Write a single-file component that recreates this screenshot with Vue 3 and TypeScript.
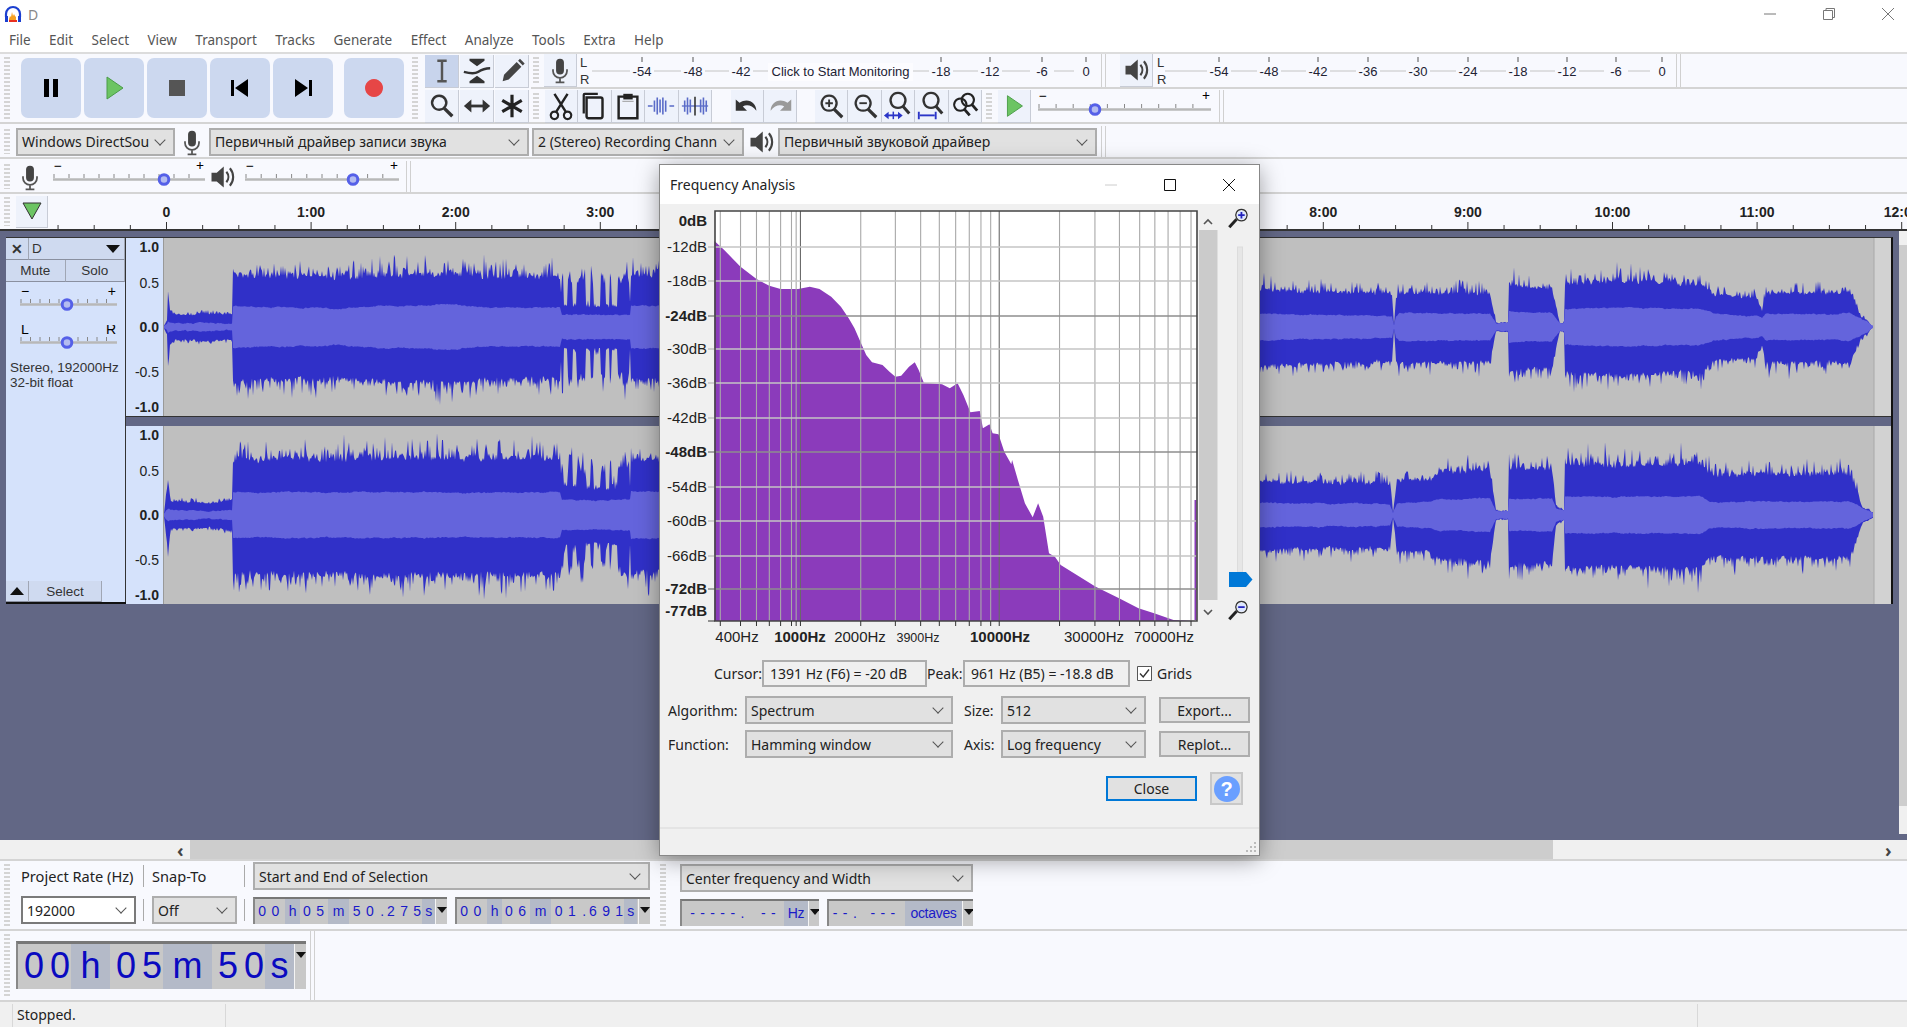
<script setup lang="ts">
import { h } from 'vue'

type Shape = { d: string; fill?: string; stroke?: string; w?: number }

const f = (d: string, fill = '#222'): Shape => ({ d, fill })
const s = (d: string, stroke = '#333', w = 2.5): Shape => ({ d, stroke, w })

const lens = 'M14 5a8 8 0 1 0 .01 0z'
const wavePath = 'M2 16h5M9 10v12M12 7v18M15 9v14M18 7v18M21 10v12M25 16h5'

const icons: Record<string, Shape[]> = {
  pause: [f('M9 7h5v18H9zM18 7h5v18h-5z', '#000')],
  play: [{ d: 'M9 5l16 11L9 27z', fill: '#6cc463', stroke: '#4a9c48', w: 1 }],
  stop: [f('M8 8h16v16H8z', '#555')],
  start: [f('M7 8h3v16H7zM24 7v18L11 16z', '#000')],
  end: [f('M8 7v18l13-9zM22 8h3v16h-3z', '#000')],
  rec: [f('M16 7a9 9 0 1 0 .01 0z', '#e64646')],
  ibeam: [s('M11 5h10M11 27h10M16 5v22', '#555', 2.6)],
  env: [f('M8 3h16v2l-8 6-8-6zM16 21l8 6v2H8v-2z', '#333'), s('M2 17c8 2 12 2 15 0s8-4 13-4', '#333', 2.6)],
  pencil: [f('M6 27l1.5-7L21 6.5l5 5L12.5 25zM22.5 5l2-2 5 5-2 2z', '#444')],
  zoom: [s('M13 5a7.5 7.5 0 1 0 .01 0z', '#333', 2.6), s('M18.5 18.5L27 27', '#333', 3.6)],
  shift: [s('M6 16h20', '#333', 3), f('M10 9v14l-8-7zM22 9v14l8-7z', '#333')],
  multi: [s('M16 4v24M5.6 10l20.8 12M5.6 22l20.8-12', '#222', 3.4)],
  cut: [s('M9 3l12 19M23 3L11 22', '#222', 2.6), s('M9 22a4 4 0 1 0 .01 0zM23 22a4 4 0 1 0 .01 0z', '#222', 2.4)],
  copy: [{ d: 'M7 7h15a2 2 0 0 1 2 2v18a2 2 0 0 1-2 2H9a2 2 0 0 1-2-2z', fill: '#eef2fb', stroke: '#222', w: 2.6 }, s('M4 24V4a1 1 0 0 1 1-1h14', '#222', 2.4)],
  paste: [{ d: 'M6 6h20v23H6z', fill: 'none', stroke: '#222', w: 2.6 }, f('M11 3h10v6H11z', '#222'), s('M10 11h12', '#999', 1)],
  trim: [s(wavePath, '#5a6bc8', 1.7)],
  silence: [s('M2 16h28', '#5a6bc8', 1.4), s('M5 10v12M8 7v18M11 9v14M22 9v14M25 7v18M28 10v12', '#5a6bc8', 1.7), s('M16 6v20', '#333', 1.7)],
  undo: [f('M4 9v12h12l-4.5-4.5c4-2.8 10-1.5 14.5 4.5 0-8.5-9-14.5-18-8.5z', '#333')],
  redo: [f('M28 9v12H16l4.5-4.5c-4-2.8-10-1.5-14.5 4.5 0-8.5 9-14.5 18-8.5z', '#9a9a9a')],
  zoomin: [s(lens, '#333', 2.4), s('M10 13h8M14 9v8', '#333', 2), s('M19.5 19.5L28 28', '#333', 3.4)],
  zoomout: [s(lens, '#333', 2.4), s('M10 13h8', '#333', 2), s('M19.5 19.5L28 28', '#333', 3.4)],
  zoomsel: [s('M16 2a8 8 0 1 0 .01 0z', '#333', 2.4), s('M21 16l7 8', '#333', 3.2), s('M4 26h14', '#2b35c8', 2), f('M1 26l5-4v8zM21 26l-5-4v8z', '#2b35c8'), s('M11 22v8', '#2b35c8', 1.6)],
  zoomfit: [s('M16 2a8 8 0 1 0 .01 0z', '#333', 2.4), s('M21 16l7 8', '#333', 3.2), s('M4 26h16', '#2b35c8', 2), s('M3 22v8M21 22v8', '#2b35c8', 2)],
  zoomtog: [s('M11 8a6.5 6.5 0 1 0 .01 0z', '#222', 2.2), s('M19 3a6.5 6.5 0 1 0 .01 0z', '#222', 2.2), s('M15 19l6 7M23 14l6 7', '#222', 3)],
  mic: [f('M16 3a4.5 4.5 0 0 1 4.5 4.5v9a4.5 4.5 0 0 1-9 0v-9A4.5 4.5 0 0 1 16 3z', '#444'), s('M8 15v2a8 8 0 0 0 16 0v-2M16 25v5M11 30h10', '#555', 2)],
  spk: [f('M4 11h6l8-7v24l-8-7H4z', '#444'), s('M21 10c3 3.5 3 8.5 0 12M25 6c5 6 5 14 0 20', '#444', 2.4)],
  lensup: [s('M19 3a7 7 0 1 0 .01 0z', '#333', 1.6), f('M19 4.5a5.5 5.5 0 1 0 .01 0z', '#dce6ff'), s('M15 10h8M19 6v8', '#2222bb', 2.2), s('M13 15L4 25', '#222', 3.6)],
  lensdn: [s('M19 3a7 7 0 1 0 .01 0z', '#333', 1.6), f('M19 4.5a5.5 5.5 0 1 0 .01 0z', '#dce6ff'), s('M15 10h8', '#2222bb', 2.2), s('M13 15L4 25', '#222', 3.6)]
}

const Ico = (p: { n: string; s?: number | string }) =>
  h('svg', { width: p.s ?? 28, height: p.s ?? 28, viewBox: '0 0 32 32', class: 'ico' },
    icons[p.n].map(a => h('path', {
      d: a.d,
      fill: a.fill ?? 'none',
      stroke: a.stroke ?? 'none',
      'stroke-width': a.w ?? 0
    })))

// small slider with tick marks and a round blue thumb
const Slider = (p: { w: number; at: number; a?: string; b?: string }) => {
  const ticks = []
  for (let x = 1; x < p.w; x += p.w / 10) {
    ticks.push(h('path', { d: `M${x} 12v4`, stroke: '#888', 'stroke-width': 1 }))
  }
  return h('svg', { width: p.w + 2, height: 30, viewBox: `0 0 ${p.w + 2} 30`, class: 'ico' }, [
    h('text', { x: 1, y: 9, class: 'sl-txt' }, p.a ?? '−'),
    h('text', { x: p.w + 1, y: 9, 'text-anchor': 'end', class: 'sl-txt' }, p.b ?? '+'),
    ...ticks,
    h('path', { d: `M0 17.5H${p.w + 2}`, stroke: '#b8b8b8', 'stroke-width': 2.6 }),
    h('circle', { cx: p.at, cy: 17.5, r: 4.8, fill: '#b4bcf0', stroke: '#5560e8', 'stroke-width': 3 })
  ])
}

const menu = ['File', 'Edit', 'Select', 'View', 'Transport', 'Tracks', 'Generate', 'Effect', 'Analyze', 'Tools', 'Extra', 'Help']
const transport = [
  { n: 'pause', g: false }, { n: 'play', g: false }, { n: 'stop', g: false },
  { n: 'start', g: false }, { n: 'end', g: false }, { n: 'rec', g: true }
]
const tools1 = ['ibeam', 'env', 'pencil']
const tools2 = ['zoom', 'shift', 'multi']
const editA = ['cut', 'copy', 'paste', 'trim', 'silence']
const editB = ['undo', 'redo']
const editC = ['zoomin', 'zoomout', 'zoomsel', 'zoomfit', 'zoomtog']

const recLabels = [
  [642, '-54'], [693, '-48'], [741, '-42'], [941, '-18'], [990, '-12'], [1042, '-6'], [1086, '0']
] as [number, string][]
const playLabels = [
  [1219, '-54'], [1269, '-48'], [1318, '-42'], [1368, '-36'], [1418, '-30'], [1468, '-24'], [1518, '-18'], [1567, '-12'], [1616, '-6'], [1662, '0']
] as [number, string][]

// timeline, 144.6px to the minute and 0 at x=166.5
const secX = (m: number) => 166.5 + 144.6 * m
const rulerTicks: { x: number; major: boolean }[] = []
for (let q = -3; q <= 48; q++) rulerTicks.push({ x: secX(q / 4), major: q % 4 === 0 })
const rulerLabels = [0, 1, 2, 3, 4, 5, 6, 7, 8, 9, 10, 11, 12].map(m => ({ x: secX(m), t: m === 0 ? '0' : `${m}:00` }))

type Key = [number, number, number]
const keysA: Key[] = [[164, 2, 1], [167, 8, 3], [168, 38, 5], [170, 18, 4], [175, 13, 3], [232, 14, 3], [233, 56, 19], [340, 54, 17], [350, 54, 18], [440, 58, 21], [500, 55, 18], [560, 54, 18], [562, 22, 11], [630, 22, 11], [631, 56, 20], [1260, 40, 12], [1392, 36, 10], [1394, 2, 1], [1396, 32, 10], [1400, 38, 13], [1490, 36, 12], [1496, 4, 3], [1508, 4, 3], [1509, 46, 14], [1552, 42, 13], [1560, 5, 4], [1564, 6, 4], [1565, 48, 17], [1640, 50, 18], [1700, 46, 16], [1714, 34, 12], [1755, 33, 10], [1762, 18, 8], [1766, 37, 12], [1850, 37, 12], [1860, 12, 8], [1873, 1, 1]]
const keysB: Key[] = [[164, 2, 1], [168, 36, 5], [171, 14, 4], [175, 14, 4], [232, 15, 4], [233, 60, 21], [400, 62, 21], [560, 62, 21], [562, 30, 14], [630, 30, 14], [631, 60, 22], [1260, 36, 11], [1390, 34, 10], [1393, 3, 2], [1397, 36, 10], [1430, 38, 12], [1440, 48, 15], [1490, 48, 15], [1496, 4, 3], [1508, 4, 3], [1509, 52, 15], [1552, 50, 15], [1556, 10, 6], [1564, 5, 4], [1565, 54, 17], [1700, 56, 17], [1710, 44, 12], [1850, 44, 12], [1862, 10, 7], [1873, 3, 2]]
const bars = [[560, 564], [568, 573], [577, 586], [591, 594], [601, 606], [610, 612], [618, 630]]

function buildWave(keys: Key[], seed: number) {
  let st = seed
  const rnd = () => {
    st = (st * 1664525 + 1013904223) % 4294967296
    return st / 4294967296
  }
  const top: string[] = []
  const bot: string[] = []
  const rt: string[] = []
  const rb: string[] = []
  const mid = 89
  let k = 0
  let wob = 0
  for (let x = 164; x <= 1873; x++) {
    while (k < keys.length - 2 && keys[k + 1][0] <= x) k++
    const [x0, p0, r0] = keys[k]
    const [x1, p1, r1] = keys[k + 1]
    const t = Math.min(1, (x - x0) / Math.max(1, x1 - x0))
    let p = (p0 + (p1 - p0) * t) * 1.06
    const r = (r0 + (r1 - r0) * t) * 1.06
    if (x > 561 && x < 631 && bars.some(b => x >= b[0] && x < b[1])) p = 48 + 14 * rnd()
    wob = wob * 0.85 + (rnd() - 0.5) * 1.1
    const spike = () => (rnd() < 0.4 ? p * 0.34 * rnd() * rnd() + p * 0.06 : 0)
    const up = p * (0.82 + 0.1 * rnd()) + spike() + wob
    const dn = p * (0.86 + 0.1 * rnd()) + spike() + wob
    top.push(`${x} ${(mid - up).toFixed(1)}`)
    bot.unshift(`${x} ${(mid + dn).toFixed(1)}`)
    rt.push(`${x} ${(mid - r - wob * 0.7 - rnd() * 0.8).toFixed(1)}`)
    rb.unshift(`${x} ${(mid + r + wob * 0.7 + rnd() * 0.8).toFixed(1)}`)
  }
  return { peak: `M${top.join('L')}L${bot.join('L')}z`, rms: `M${rt.join('L')}L${rb.join('L')}z` }
}
const scale = [{ t: '1.0', b: true, c: 'a' }, { t: '0.5', b: false, c: 'b5' }, { t: '0.0', b: true, c: 'c' }, { t: '-0.5', b: false, c: 'd' }, { t: '-1.0', b: true, c: 'e' }]
const channels = [
  { wave: buildWave(keysA, 17), scale },
  { wave: buildWave(keysB, 93), scale }
]

// spectrum plot, drawn in page coordinates through the viewBox
const gx = (z: number) => 660 + z / 2.5705
const dbLines = [
  { y: 247, t: '-12dB', m: false }, { y: 281, t: '-18dB', m: false }, { y: 316, t: '-24dB', m: true },
  { y: 349, t: '-30dB', m: false }, { y: 383, t: '-36dB', m: false }, { y: 418, t: '-42dB', m: false },
  { y: 452, t: '-48dB', m: true }, { y: 487, t: '-54dB', m: false }, { y: 521, t: '-60dB', m: false },
  { y: 556, t: '-66dB', m: false }, { y: 589, t: '-72dB', m: true }
]
const freqLines = [155, 207, 248, 281, 310, 338, 350, 361, 516, 605, 670, 718, 760, 795, 825, 850, 872, 1027, 1118, 1181, 1233, 1272, 1306, 1337, 1365]
  .map(z => ({ x: gx(z), dark: z === 361 || z === 872 }))
const freqLabels = [
  { x: 737, t: '400Hz', c: '' }, { x: 800, t: '1000Hz', c: 'b' }, { x: 860, t: '2000Hz', c: '' }, { x: 918, t: '3900Hz', c: 's' },
  { x: 1000, t: '10000Hz', c: 'b' }, { x: 1094, t: '30000Hz', c: '' }, { x: 1164, t: '70000Hz', c: '' }
]
const upper = [[140, 228], [165, 255], [207, 305], [248, 342], [281, 362], [310, 372], [355, 372], [385, 365], [410, 372], [440, 395], [465, 425], [485, 460], [500, 490], [515, 530], [530, 570], [545, 592], [572, 600], [590, 620], [605, 635], [620, 632], [640, 605], [655, 592], [665, 615], [678, 653], [725, 658], [745, 670], [765, 655], [780, 690], [798, 742], [822, 738], [830, 790], [847, 778], [855, 805], [870, 808], [885, 860], [903, 898]]
const lower = [[905, 0], [920, 60], [938, 130], [958, 172], [972, 130], [985, 170], [1000, 280], [1015, 290], [1030, 315], [1120, 380], [1180, 415], [1230, 445], [1270, 460], [1320, 480], [1378, 483]]
const spectrum = 'M' + [
  ...upper.map(p => `${gx(p[0]).toFixed(1)} ${(165 + p[1] / 3).toFixed(1)}`),
  ...lower.map(p => `${gx(p[0]).toFixed(1)} ${(460 + p[1] / 3).toFixed(1)}`)
].join('L') + `L${gx(140).toFixed(1)} 621z`

type Cell = { t: string; w: number; u?: boolean; c?: boolean }
const selA: Cell[] = [{ t: '00', w: 30 }, { t: 'h', w: 15, u: true, c: true }, { t: '05', w: 28 }, { t: 'm', w: 21, u: true, c: true }, { t: '50', w: 31 }, { t: '.', w: 4, c: true }, { t: '275', w: 38 }, { t: 's', w: 13, u: true, c: true }]
const selB: Cell[] = [{ t: '00', w: 30 }, { t: 'h', w: 15, u: true, c: true }, { t: '06', w: 28 }, { t: 'm', w: 21, u: true, c: true }, { t: '01', w: 31 }, { t: '.', w: 4, c: true }, { t: '691', w: 38 }, { t: 's', w: 13, u: true, c: true }]
const hz: Cell[] = [{ t: '-----.', w: 73 }, { t: '--', w: 29 }, { t: 'Hz', w: 24, u: true, c: true }]
const oct: Cell[] = [{ t: '--.', w: 34 }, { t: '---', w: 42 }, { t: 'octaves', w: 57, u: true, c: true }]
const clock: Cell[] = [{ t: '00', w: 53 }, { t: 'h', w: 39, u: true, c: true }, { t: '05', w: 53 }, { t: 'm', w: 49, u: true, c: true }, { t: '50', w: 53 }, { t: 's', w: 29, u: true, c: true }]
</script>

<template>
  <div class="app">
    <div class="titlebar">
      <svg class="logo" width="18" height="18" viewBox="0 0 18 18">
        <path d="M2 12V9a7 7 0 0 1 14 0v3" fill="none" stroke="#1b3fd0" stroke-width="2.2" />
        <path d="M1 11h3v6H1zM14 11h3v6h-3z" fill="#1b3fd0" />
        <path d="M5 14l1-3 1 1 1-5 1 4 1-2 1 2 1 1v5H5z" fill="#f5a020" />
        <path d="M5 15h8v2H5z" fill="#e83020" />
      </svg>
      <span class="doc">D</span>
      <div class="winbtns">
        <svg width="14" height="14" viewBox="0 0 14 14"><path d="M1 7h12" stroke="#777" /></svg>
        <svg width="14" height="14" viewBox="0 0 14 14"><path d="M1.5 3.5h9v9h-9zM4 3.5V1.5h8.5v9h-2" fill="none" stroke="#777" /></svg>
        <svg width="14" height="14" viewBox="0 0 14 14"><path d="M1 1l12 12M13 1L1 13" stroke="#777" /></svg>
      </div>
    </div>
    <div class="menubar">
      <span v-for="m in menu" :key="m">{{ m }}</span>
    </div>

    <div class="tops">
      <div class="grip"></div>
      <div class="transport">
        <button v-for="b in transport" :key="b.n" class="tbtn" :class="{ gap: b.g }"><Ico :n="b.n" s="32" /></button>
      </div>
      <div class="grip g2"></div>
      <div class="toolgrid">
        <div class="rowbtns">
          <button v-for="(n, i) in tools1" :key="n" class="ibtn tb" :class="{ on: i === 0 }"><Ico :n="n" s="30" /></button>
        </div>
        <div class="rowbtns">
          <button v-for="n in tools2" :key="n" class="ibtn tb"><Ico :n="n" s="30" /></button>
        </div>
      </div>
      <div class="rightrows">
        <div class="rline">
          <div class="grip g3"></div>
          <button class="ibtn"><Ico n="mic" /></button>
          <div class="lr"><span>L</span><span>R</span></div>
          <svg class="ico meter" width="500" height="34" viewBox="592 55 500 34">
            <path d="M592 72H1091" stroke="#c4c4c4" />
            <g v-for="l in recLabels" :key="l[1]">
              <path :d="`M${l[0]} 58v5`" stroke="#555" />
              <rect :x="l[0] - 12" y="65" width="24" height="15" fill="#f8f9fe" />
              <text :x="l[0]" y="77" text-anchor="middle" class="mtxt">{{ l[1] }}</text>
            </g>
            <rect x="768" y="64" width="145" height="18" fill="#fcfcff" />
            <text x="840.5" y="77" text-anchor="middle" class="mtxt">Click to Start Monitoring</text>
          </svg>
          <div class="vlines"></div>
          <div class="grip g4"></div>
          <button class="ibtn"><Ico n="spk" /></button>
          <div class="lr lr2"><span>L</span><span>R</span></div>
          <svg class="ico" width="505" height="34" viewBox="1165 55 505 34">
            <path d="M1165 72H1668" stroke="#c4c4c4" />
            <g v-for="l in playLabels" :key="l[1]">
              <path :d="`M${l[0]} 58v5`" stroke="#555" />
              <rect :x="l[0] - 12" y="65" width="24" height="15" fill="#f8f9fe" />
              <text :x="l[0]" y="77" text-anchor="middle" class="mtxt">{{ l[1] }}</text>
            </g>
          </svg>
          <div class="vlines v2"></div>
        </div>
        <div class="rline second">
          <div class="grip g3"></div>
          <button v-for="n in editA" :key="n" class="ibtn ed"><Ico :n="n" s="30" /></button>
          <span class="sp19"></span>
          <button v-for="n in editB" :key="n" class="ibtn ud"><Ico :n="n" s="30" /></button>
          <span class="sp18"></span>
          <button v-for="n in editC" :key="n" class="ibtn ed"><Ico :n="n" s="30" /></button>
          <div class="grip g5"></div>
          <button class="ibtn"><Ico n="play" s="30" /></button>
          <Slider class="sl3" :w="171" :at="57" />
          <div class="vlines v3"></div>
        </div>
      </div>
    </div>

    <div class="bar devices">
      <div class="grip"></div>
      <div class="sel s1"><span>Windows DirectSou</span></div>
      <Ico n="mic" s="28" class="dv" />
      <div class="sel s2"><span>Первичный драйвер записи звука</span></div>
      <div class="sel s3"><span>2 (Stereo) Recording Chann</span></div>
      <Ico n="spk" s="28" class="dv2" />
      <div class="sel s4"><span>Первичный звуковой драйвер</span></div>
      <div class="vlines v4"></div>
    </div>

    <div class="bar mixer">
      <div class="grip"></div>
      <Ico n="mic" s="28" class="mx" />
      <Slider :w="150" :at="111" />
      <Ico n="spk" s="28" class="mx2" />
      <Slider :w="152" :at="108" />
      <div class="vlines v5"></div>
    </div>

    <div class="bar ruler">
      <div class="grip"></div>
      <button class="headbtn">
        <svg width="22" height="18" viewBox="0 0 22 18"><path d="M2 1h18L11 17z" fill="#6cc463" stroke="#333" /></svg>
      </button>
      <svg class="ico" width="1857" height="35" viewBox="50 194 1857 35">
        <path v-for="t in rulerTicks" :key="t.x" :d="`M${t.x} ${t.major ? 222 : 225}V229`" stroke="#333" />
        <text v-for="l in rulerLabels" :key="l.t" :x="l.x" y="217" text-anchor="middle" class="rtxt">{{ l.t }}</text>
      </svg>
    </div>

    <div class="tracks">
      <div class="track">
        <div class="tpanel">
          <div class="thead">
            <button class="pbtn x">✕</button>
            <button class="pbtn name"><span>D</span><i class="down"></i></button>
          </div>
          <div class="thead ms">
            <button class="pbtn">Mute</button>
            <button class="pbtn">Solo</button>
          </div>
          <Slider class="psl" :w="95" :at="47" />
          <Slider class="psl two" :w="95" :at="47" a="L" b="R" />
          <div class="info">Stereo, 192000Hz<br />32-bit float</div>
          <div class="tfoot">
            <button class="pbtn x"><i class="up"></i></button>
            <button class="pbtn sel-btn">Select</button>
          </div>
        </div>
        <div class="chans">
          <div v-for="(c, i) in channels" :key="i" class="chan">
            <div class="scale">
              <span v-for="m in c.scale" :key="m.t" :class="[m.c, { b: m.b }]">{{ m.t }}</span>
            </div>
            <svg class="ico wave" width="1727" height="178" viewBox="164 0 1727 178">
              <rect x="164" y="0" width="1727" height="178" fill="#bfbfbf" />
              <rect x="1874" y="0" width="17" height="178" fill="#d2d2d2" />
              <path d="M1874 0v178" stroke="#a8a8a8" />
              <path :d="c.wave.peak" fill="#3030c8" />
              <path :d="c.wave.rms" fill="#6464dc" />
            </svg>
          </div>
        </div>
      </div>
      <div class="vscroll">
        <div class="vthumb"></div>
      </div>
    </div>

    <div class="hscroll">
      <span class="chev l">‹</span>
      <div class="hthumb"></div>
      <span class="chev r">›</span>
    </div>

    <div class="selbar">
      <div class="grip"></div>
      <div class="selcol">
        <div class="line1">
          <span class="lbl pr">Project Rate (Hz)</span><i class="sepv"></i>
          <span class="lbl st">Snap-To</span><i class="sepv"></i>
          <div class="sel s5"><span>Start and End of Selection</span></div>
        </div>
        <div class="line2">
          <div class="sel s6"><span>192000</span></div><i class="sepv"></i>
          <div class="sel s7"><span>Off</span></div><i class="sepv"></i>
          <div class="num n1">
            <span v-for="c in selA" :key="c.t" class="cell" :class="{ unit: c.u, tight: c.c }" :style="{ width: c.w + 'px' }">{{ c.t }}</span>
            <i class="drop"></i>
          </div>
          <div class="num n2">
            <span v-for="c in selB" :key="c.t" class="cell" :class="{ unit: c.u, tight: c.c }" :style="{ width: c.w + 'px' }">{{ c.t }}</span>
            <i class="drop"></i>
          </div>
        </div>
      </div>
      <div class="grip gs"></div>
      <div class="selcol c2">
        <div class="sel s8"><span>Center frequency and Width</span></div>
        <div class="line3">
          <div class="num n3">
            <span v-for="c in hz" :key="c.t" class="cell" :class="{ unit: c.u, tight: c.c }" :style="{ width: c.w + 'px' }">{{ c.t }}</span>
            <i class="drop"></i>
          </div>
          <div class="num n4">
            <span v-for="c in oct" :key="c.t" class="cell" :class="{ unit: c.u, tight: c.c }" :style="{ width: c.w + 'px' }">{{ c.t }}</span>
            <i class="drop"></i>
          </div>
        </div>
      </div>
    </div>

    <div class="clockbar">
      <div class="grip"></div>
      <div class="clock">
        <span v-for="c in clock" :key="c.t" class="ccell" :class="{ unit: c.u }" :style="{ width: c.w + 'px' }">{{ c.t }}</span>
        <i class="drop"></i>
      </div>
      <div class="vlines v6"></div>
    </div>

    <div class="status">
      <span class="stxt">Stopped.</span>
      <i class="stsep"></i>
    </div>

    <div class="dialog">
      <div class="dtitle">
        <span>Frequency Analysis</span>
        <div class="dbtns">
          <svg width="14" height="14" viewBox="0 0 14 14"><path d="M1 7h12" stroke="#ccc" /></svg>
          <svg width="14" height="14" viewBox="0 0 14 14"><path d="M1.5 1.5h11v11h-11z" fill="none" stroke="#111" /></svg>
          <svg width="14" height="14" viewBox="0 0 14 14"><path d="M1 1l12 12M13 1L1 13" stroke="#111" /></svg>
        </div>
      </div>
      <svg class="ico" width="599" height="456" viewBox="660 204 599 456">
        <rect x="715" y="211" width="482" height="410" fill="#fff" />
        <path :d="spectrum" fill="#8b3bbb" />
        <path d="M1195.5 500V620" stroke="#8b3bbb" stroke-width="2" />
        <path v-for="l in freqLines" :key="l.x" :d="`M${l.x} 211V621`" :stroke="l.dark ? '#6a6a6a' : '#a8a8a8'" stroke-width="1.1" />
        <path v-for="l in dbLines" :key="l.y" :d="`M708 ${l.y}H1197`" :stroke="l.m ? '#8e8e8e' : '#c4c4c4'" stroke-width="1.3" />
        <path d="M715 211H1197V621H715z" fill="none" stroke="#444" stroke-width="1.6" />
        <text x="707" y="226" text-anchor="end" class="dtxt b">0dB</text>
        <text v-for="l in dbLines" :key="l.t" x="707" :y="l.y + 5" text-anchor="end" class="dtxt" :class="{ b: l.m }">{{ l.t }}</text>
        <text x="707" y="616" text-anchor="end" class="dtxt b">-77dB</text>
        <path d="M708 621h7" stroke="#333" />
        <path v-for="l in freqLines" :key="'t' + l.x" :d="`M${l.x} 621v5`" stroke="#333" />
        <text v-for="l in freqLabels" :key="l.t" :x="l.x" y="642" text-anchor="middle" class="dtxt" :class="l.c">{{ l.t }}</text>

        <path d="M1204 224l4-4 4 4" fill="none" stroke="#555" stroke-width="1.6" />
        <rect x="1199" y="230" width="18.5" height="370" fill="#cbcbcb" />
        <path d="M1204 610l4 4 4-4" fill="none" stroke="#555" stroke-width="1.6" />
        <rect x="1237.5" y="247" width="5" height="325" fill="#e6e6e6" stroke="#dcdcdc" />
        <path d="M1229 572h17l6.5 7.5-6.5 7.5h-17z" fill="#0078d7" />
        <svg x="1226" y="207" width="26" height="26" viewBox="0 0 32 32"><path v-for="a in icons.lensup" :key="a.d" :d="a.d" :fill="a.fill ?? 'none'" :stroke="a.stroke ?? 'none'" :stroke-width="a.w ?? 0" /></svg>
        <svg x="1226" y="599" width="26" height="26" viewBox="0 0 32 32"><path v-for="a in icons.lensdn" :key="a.d" :d="a.d" :fill="a.fill ?? 'none'" :stroke="a.stroke ?? 'none'" :stroke-width="a.w ?? 0" /></svg>
      </svg>

      <div class="frow cursor">
        <span class="w48">Cursor:</span>
        <div class="field f1">1391 Hz (F6) = -20 dB</div>
        <span class="w35">Peak:</span>
        <div class="field f2">961 Hz (B5) = -18.8 dB</div>
        <svg class="check" width="15" height="15" viewBox="0 0 15 15">
          <path d="M.5.5h14v14H.5z" fill="#fff" stroke="#555" />
          <path d="M3 7.5l3.2 3.5L12 3.5" fill="none" stroke="#333" stroke-width="1.4" />
        </svg>
        <span class="grids">Grids</span>
      </div>
      <div class="frow form">
        <span class="w77">Algorithm:</span>
        <div class="sel d1"><span>Spectrum</span></div>
        <span class="w37">Size:</span>
        <div class="sel d2"><span>512</span></div>
        <button class="dbtn">Export...</button>
      </div>
      <div class="frow form f2nd">
        <span class="w77">Function:</span>
        <div class="sel d1"><span>Hamming window</span></div>
        <span class="w37">Axis:</span>
        <div class="sel d2"><span>Log frequency</span></div>
        <button class="dbtn">Replot...</button>
      </div>
      <div class="frow last">
        <button class="close">Close</button>
        <button class="help"><span>?</span></button>
      </div>
      <div class="dfoot">
        <svg class="rz" width="12" height="12" viewBox="0 0 12 12">
          <path d="M9 1h2v2H9zM5 5h2v2H5zM9 5h2v2H9zM1 9h2v2H1zM5 9h2v2H5zM9 9h2v2H9z" fill="#bbb" />
        </svg>
      </div>
    </div>
  </div>
</template>

<style>
html, body { margin: 0; background: #fff; }
</style>

<style scoped>
.app {
  position: relative;
  width: 1907px;
  height: 1027px;
  overflow: hidden;
  display: flex;
  flex-direction: column;
  font-family: "Noto Sans", "Noto Sans CJK SC", sans-serif;
  font-size: 14px;
  color: #222;
  background: #f8f9fe;
}
button { font: inherit; color: inherit; padding: 0; }
.ico { display: block; flex: none; }
.titlebar { height: 28px; display: flex; align-items: center; background: #fff; flex: none; }
.logo { margin-left: 4px; }
.doc { margin-left: 6px; color: #888; font-size: 14px; }
.winbtns { margin-left: auto; display: flex; gap: 45px; padding-right: 12px; }
.menubar { height: 26px; display: flex; align-items: center; background: #fff; padding-left: 9px; flex: none; color: #555; font-size: 13.5px; border-bottom: 2px solid #dcdcdc; box-sizing: border-box; }
.menubar span { margin-right: 18.4px; }

.grip {
  width: 6px;
  margin: 3px 3px 3px 4px;
  background: repeating-linear-gradient(to bottom, #d4d4d4 0 2px, transparent 2px 4px);
  flex: none;
}
.tops { height: 70px; display: flex; flex: none; border-bottom: 2px solid #d4d4d4; box-sizing: border-box; }
.tops > .grip:first-child { margin-right: 11px; }
.transport { display: flex; align-items: center; gap: 3px; width: 391px; flex: none; }
.tbtn { width: 60px; height: 60px; background: #ccd8ef; border: 0; border-radius: 7px; display: flex; align-items: center; justify-content: center; flex: none; }
.tbtn.gap { margin-left: 8px; }
.g2 { margin-left: 0; margin-right: 7px; }
.toolgrid { width: 106px; display: flex; flex-direction: column; gap: 2px; padding-top: 1px; flex: none; }
.rowbtns { display: flex; gap: 1px; }
.ibtn { width: 33px; height: 33px; background: #eef2fb; border: 0; border-right: 1px solid #c8ccd6; border-bottom: 1px solid #c8ccd6; display: flex; align-items: center; justify-content: center; box-sizing: border-box; flex: none; }
.ibtn.tb { width: 34px; }
.ibtn.on { background: #c8d4ec; }
.rightrows { flex: 1; display: flex; flex-direction: column; min-width: 0; }
.rline { height: 35px; display: flex; align-items: center; border-bottom: 2px solid #d4d4d4; box-sizing: border-box; }
.rline.second { border-bottom: 0; padding-top: 1px; }
.g3 { height: 28px; margin: 0 5px 0 2px; }
.lr { width: 12px; height: 33px; margin-left: 3px; display: flex; flex-direction: column; font: 13px "Liberation Sans", sans-serif; line-height: 17px; color: #333; flex: none; }
.vlines { width: 3px; height: 100%; border-left: 1px solid #d0d0d0; border-right: 1px solid #d0d0d0; margin-left: 9px; flex: none; }
.g4 { margin: 0 5px 0 3px; }
.lr2 { margin-left: 4px; width: 8px; }
.v2 { margin-left: 6px; }
.second .g3 { margin-right: 6px; }
.ed { width: 33.4px; height: 33px; }
.ud { width: 33px; }
.sp18 { width: 18px; flex: none; }
.sp19 { width: 19px; flex: none; }
.g5 { margin: 0 6px 0 4px; height: 28px; }
.sl3 { margin-left: 7px; }
.v3 { margin-left: 8px; }
.mtxt { font: 13px "Liberation Sans", sans-serif; fill: #223; }
.rtxt { font: bold 14px "Liberation Sans", sans-serif; fill: #222; }
.sl-txt { font: bold 11px "Liberation Sans", sans-serif; fill: #333; }

.bar { height: 35px; display: flex; align-items: center; flex: none; border-bottom: 2px solid #d4d4d4; box-sizing: border-box; }
.devices, .mixer { padding-top: 2px; }
.bar .grip { align-self: stretch; }
.sel {
  position: relative;
  height: 28px;
  box-sizing: border-box;
  background: #e1e1e1;
  border: 2px solid #adadad;
  display: flex;
  align-items: center;
  padding-left: 4px;
  flex: none;
  white-space: nowrap;
  overflow: hidden;
  font-size: 14px;
}
.sel::after {
  content: '';
  position: absolute;
  right: 9px;
  top: 6px;
  width: 7px;
  height: 7px;
  border-right: 1px solid #555;
  border-bottom: 1px solid #555;
  transform: rotate(45deg);
}
.s1 { width: 159px; margin-left: 3px; }
.dv { margin: 0 3px; }
.s2 { width: 320px; }
.s3 { width: 212px; margin-left: 3px; }
.dv2 { margin: 0 3px; }
.s4 { width: 319px; }
.v4 { margin-left: 4px; }
.mx { margin-left: 3px; margin-right: 9px; }
.mx2 { margin: 0 9px 0 3px; }
.v5 { margin-left: 7px; }
.ruler { border-bottom: 0; }
.headbtn { width: 32px; height: 32px; margin-left: 3px; background: #eef2fb; border: 0; border-right: 1px solid #c8ccd6; border-bottom: 1px solid #c8ccd6; display: flex; align-items: center; justify-content: center; flex: none; }
.ruler .ico { margin-left: 2px; }

.tracks { flex: 1; background: #626785; display: flex; align-items: flex-start; justify-content: space-between; border-top: 2px solid #333; padding: 6px 0 0 6px; box-sizing: border-box; min-height: 0; }
.track { display: flex; height: 367px; width: 1887px; border-right: 2px solid #111; border-bottom: 2px solid #111; border-top: 1px solid #333; box-sizing: border-box; background: #626785; flex: none; }
.tpanel { width: 120px; background: #d5e2fb; border-right: 1px solid #333; display: flex; flex-direction: column; position: relative; font: 14px "Liberation Sans", sans-serif; flex: none; box-sizing: border-box; }
.thead { display: flex; height: 22px; flex: none; }
.pbtn { background: #cfdaf0; border: 0; border-right: 1px solid #a0a6b4; border-bottom: 1px solid #8a90a0; box-sizing: border-box; font: 13.5px "Liberation Sans", sans-serif; color: #333; flex: 1; display: flex; align-items: center; justify-content: center; }
.pbtn.x { flex: none; width: 23px; font-weight: bold; font-size: 14px; }
.pbtn.name { justify-content: space-between; padding: 0 4px 0 3px; }
.down { width: 0; height: 0; border: 7px solid transparent; border-top: 8px solid #111; border-bottom: 0; }
.up { width: 0; height: 0; border: 7px solid transparent; border-bottom: 8px solid #111; border-top: 0; }
.psl { margin: 5px 0 0 14px; }
.psl.two { margin-top: 8px; }
.info { margin: 5px 0 0 4px; font-size: 13.5px; line-height: 15px; color: #333; }
.tfoot { display: flex; height: 21px; margin-top: auto; }
.sel-btn { flex: none; width: 73px; }
.chans { display: flex; flex-direction: column; gap: 9px; flex: 1; min-width: 0; }
.chan { display: flex; height: 178px; background: #bfbfbf; flex: none; border-bottom: 1px solid #333; }
.chan:last-child { border-bottom: 0; }
.scale { width: 38px; flex: none; background: #d5e2fb; position: relative; font: 14px "Liberation Sans", sans-serif; color: #222; border-right: 1px solid #999; box-sizing: border-box; }
.scale span { position: absolute; right: 4px; line-height: 16px; }
.scale .b { font-weight: bold; }
.scale .a { top: 1px; }
.scale .b5 { top: 37px; }
.scale .c { top: 81px; }
.scale .d { top: 126px; }
.scale .e { top: 161px; }
.vscroll { width: 8px; height: 100%; background: #f0f0f0; position: relative; flex: none; margin-top: -6px; }
.vthumb { position: absolute; top: 14px; bottom: 28px; left: 0; right: 0; background: #cdcdcd; }

.hscroll { height: 21px; background: #f0f0f0; display: flex; align-items: center; position: relative; flex: none; border-bottom: 2px solid #d4d4d4; box-sizing: border-box; font-size: 18px; color: #444; }
.hthumb { position: absolute; left: 190px; width: 1363px; top: 0; bottom: 0; background: #cdcdcd; }
.chev { position: absolute; line-height: 16px; font-weight: bold; }
.chev.l { left: 177px; }
.chev.r { left: 1885px; }

.selbar { height: 70px; display: flex; flex: none; border-bottom: 2px solid #d4d4d4; box-sizing: border-box; }
.selcol { width: 640px; padding-left: 8px; flex: none; display: flex; flex-direction: column; box-sizing: border-box; }
.line1 { display: flex; align-items: center; height: 30px; }
.lbl { font-size: 14.6px; white-space: nowrap; }
.pr { width: 115px; flex: none; }
.st { width: 85px; flex: none; }
.sepv { width: 1px; height: 22px; background: #aaa; margin: 0 8px 0 7px; flex: none; display: block; }
.s5 { width: 397px; }
.line2 { display: flex; align-items: center; height: 30px; margin-top: 4px; }
.s6 { width: 115px; background: #fff; border-color: #7a7a7a; }
.s7 { width: 85px; }
.num { height: 27px; box-sizing: border-box; display: flex; background: #c8c8c8; border-top: 2px solid #777; border-left: 2px solid #888; color: #1a1ac8; font: 14px "Liberation Sans", sans-serif; position: relative; flex: none; overflow: hidden; }
.n1 { width: 194px; }
.n2 { width: 195px; margin-left: 8px; }
.cell { display: block; text-align: center; letter-spacing: 5.4px; text-indent: 3px; line-height: 25px; flex: none; white-space: nowrap; }
.cell.tight { letter-spacing: -.3px; text-indent: 0; }
.cell.unit { background: #b4bac8; }
.drop { margin-left: auto; width: 12px; position: relative; background: #c8c8c8; border-left: 1px solid #f4f4f4; flex: none; display: block; box-sizing: border-box; }
.drop::after { content: ''; position: absolute; left: 1px; top: 8px; border: 5px solid transparent; border-top: 6px solid #111; border-bottom: 0; }
.gs { margin-left: 7px; margin-right: 14px; }
.c2 { width: 293px; padding: 3px 0 0 0; }
.s8 { width: 293px; }
.line3 { display: flex; justify-content: space-between; margin-top: 7px; }
.n3 { width: 139px; }
.n4 { width: 146px; }

.clockbar { height: 71px; display: flex; align-items: center; flex: none; border-bottom: 2px solid #d4d4d4; box-sizing: border-box; }
.clockbar .grip { align-self: stretch; }
.clock { display: flex; width: 290px; height: 48px; margin-left: 3px; background: #c8c8c8; border-top: 3px solid #777; border-left: 2px solid #888; box-sizing: border-box; color: #0a0ac0; font: 36px "Liberation Sans", sans-serif; flex: none; margin-top: -1px; }
.ccell { display: block; flex: none; text-align: center; line-height: 44px; letter-spacing: 6px; text-indent: 6px; white-space: nowrap; }
.ccell.unit { background: #b4bac8; letter-spacing: 0; text-indent: 0; }
.clock .drop { flex: 1; }
.v6 { margin-left: 4px; }

.status { height: 25px; flex: none; background: #f0f0f0; display: flex; align-items: center; position: relative; font-size: 14px; }
.stxt { margin-left: 17px; line-height: 25px; }
.stsep { position: absolute; left: 225px; top: 2px; bottom: 0; width: 1px; background: #d8d8d8; }
.status::before { content: ''; position: absolute; left: 12px; top: 2px; bottom: 0; width: 1px; background: #d8d8d8; }
.status::after { content: ''; position: absolute; left: 1697px; top: 2px; bottom: 0; width: 1px; background: #d8d8d8; }

.dialog { position: absolute; left: 660px; top: 165px; width: 599px; height: 690px; background: #f0f0f0; box-shadow: 0 0 0 1px #888, 0 4px 22px rgba(0, 0, 0, .4); display: flex; flex-direction: column; font-size: 14px; color: #222; }
.dtitle { height: 39px; background: #fff; display: flex; align-items: center; padding-left: 10px; flex: none; }
.dbtns { margin-left: auto; display: flex; gap: 45px; padding-right: 23px; }
.dtxt { font: 15px "Liberation Sans", sans-serif; fill: #222; }
.dtxt.b { font-weight: bold; }
.dtxt.s { font-size: 12.5px; }
.frow { display: flex; align-items: center; flex: none; }
.cursor { height: 27px; padding-left: 54px; }
.w48 { width: 48px; flex: none; white-space: nowrap; }
.w35 { width: 36px; flex: none; white-space: nowrap; }
.field { box-sizing: border-box; height: 27px; border: 2px solid #adadad; background: #f0f0f0; display: flex; align-items: center; padding-left: 6px; white-space: nowrap; }
.f1 { width: 165px; }
.f2 { width: 167px; }
.check { margin-left: 7px; }
.grids { margin-left: 5px; }
.form { height: 28px; margin-top: 9px; padding-left: 8px; }
.f2nd { margin-top: 6px; }
.w77 { width: 77px; flex: none; white-space: nowrap; }
.w37 { width: 37px; flex: none; margin-left: 11px; white-space: nowrap; }
.d1 { width: 208px; }
.d2 { width: 145px; }
.dbtn { width: 91px; height: 26px; margin-left: 13px; background: #e1e1e1; border: 2px solid #adadad; box-sizing: border-box; flex: none; }
.last { height: 33px; margin-top: 14px; padding-left: 446px; }
.close { width: 91px; height: 25px; background: #e1e1e1; border: 2px solid #0078d7; box-sizing: border-box; flex: none; }
.help { width: 33px; height: 33px; margin-left: 13px; background: #e1e1e1; border: 2px solid #c8c8c8; box-sizing: border-box; display: flex; align-items: center; justify-content: center; flex: none; }
.help span { width: 26px; height: 26px; border-radius: 50%; background: #6a9fff; color: #fff; font: bold 20px/26px "Liberation Sans", sans-serif; text-align: center; display: block; }
.dfoot { margin-top: auto; height: 28px; border-top: 2px solid #e4e4e4; position: relative; flex: none; box-sizing: border-box; }
.rz { position: absolute; right: 2px; bottom: 2px; }
</style>
